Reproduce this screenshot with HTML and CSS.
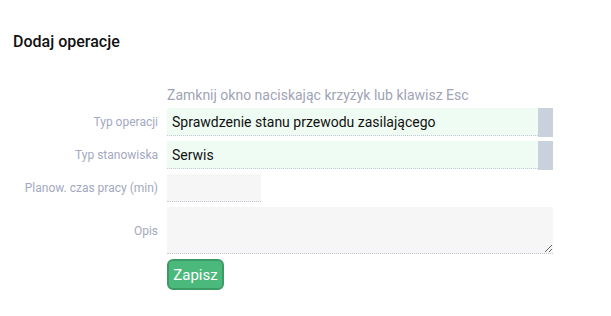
FILE: index.html
```html
<!DOCTYPE html>
<html lang="pl">
<head>
<meta charset="utf-8">
<title>Dodaj operacje</title>
<link rel="stylesheet" href="styles.css">
</head>
<body>
<div class="dialog">
  <h2 class="title">Dodaj operacje</h2>
  <form class="form">
    <div class="spacer"></div>
    <div class="hint">Zamknij okno naciskając krzyżyk lub klawisz Esc</div>

    <label class="label">Typ operacji</label>
    <div class="select">
      <div class="select-value">Sprawdzenie stanu przewodu zasilającego</div>
      <div class="select-bar"></div>
    </div>

    <label class="label">Typ stanowiska</label>
    <div class="select">
      <div class="select-value">Serwis</div>
      <div class="select-bar"></div>
    </div>

    <label class="label">Planow. czas pracy (min)</label>
    <div class="field-short"><input class="input" type="text"></div>

    <label class="label">Opis</label>
    <textarea class="textarea"></textarea>

    <div class="spacer"></div>
    <div><button type="button" class="btn">Zapisz</button></div>
  </form>
</div>
</body>
</html>
```

FILE: styles.css
```css
* { box-sizing: border-box; }
html, body { margin: 0; padding: 0; background: #ffffff; }
body { font-family: Roboto, "Liberation Sans", sans-serif; }

.dialog { padding: 32px 0 0 0; }

.title {
  margin: 0 0 36px 13px;
  font-size: 16px;
  line-height: 19px;
  font-weight: 500;
  color: #111111;
}

.form {
  display: grid;
  grid-template-columns: 158px 386px;
  column-gap: 9px;
  row-gap: 5px;
  align-items: center;
}

.hint {
  font-size: 14px;
  line-height: 16px;
  color: #a0a4b6;
}

.label {
  text-align: right;
  font-size: 12px;
  color: #a3a9c0;
}

.select {
  position: relative;
  height: 28px;
}
.select-value {
  width: 377px;
  height: 28px;
  background: #effcf3;
  border-bottom: 1px dotted #c3c6d3;
  font-size: 14px;
  line-height: 28px;
  padding-left: 5px;
  color: #111111;
}
.select-bar {
  position: absolute;
  top: 0;
  right: 0;
  width: 15px;
  height: 29px;
  background: #c9d1dc;
}

.field-short { height: 28px; }
.input {
  display: block;
  width: 94px;
  height: 28px;
  margin: 0;
  border: 0;
  border-bottom: 1px dotted #c3c6d3;
  background: #f6f6f6;
  font: 14px Roboto, "Liberation Sans", sans-serif;
  padding: 0 5px;
  outline: none;
}

.textarea {
  display: block;
  width: 386px;
  height: 47px;
  margin: 0;
  border: 0;
  border-bottom: 1px dotted #c3c6d3;
  background: #f6f6f6;
  font: 14px Roboto, "Liberation Sans", sans-serif;
  padding: 4px 5px;
  outline: none;
}

.btn {
  display: block;
  width: 57px;
  height: 31px;
  margin: 0;
  padding: 0;
  border: 2px solid #3c9a64;
  border-radius: 6px;
  background: #4cb97c;
  color: #ffffff;
  font: 15px Roboto, "Liberation Sans", sans-serif;
  cursor: pointer;
}
```
